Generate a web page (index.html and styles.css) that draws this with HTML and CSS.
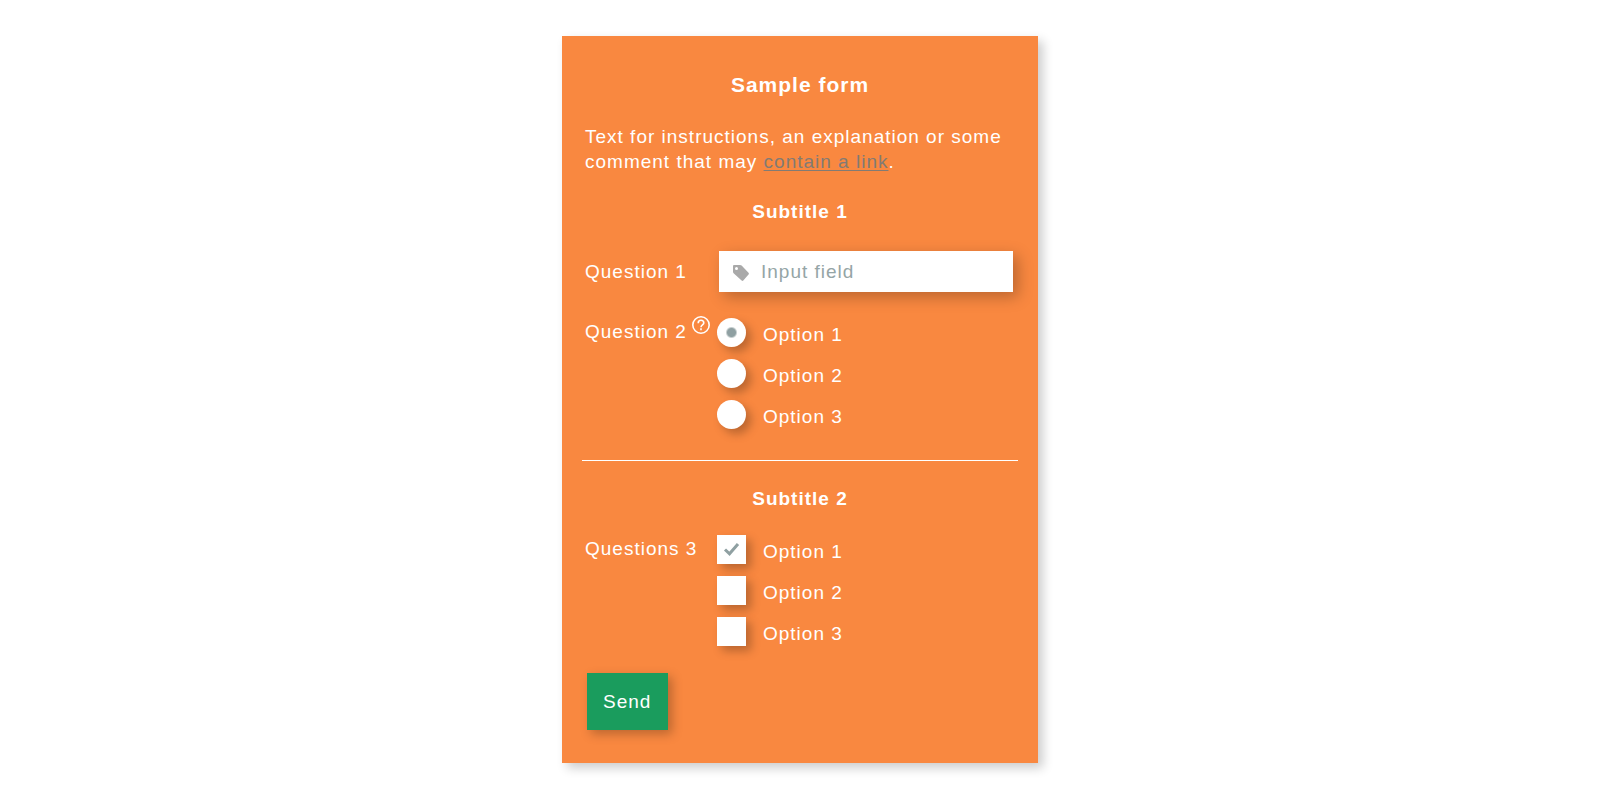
FILE: index.html
```html
<!DOCTYPE html>
<html lang="en">
<head>
<meta charset="utf-8">
<title>Sample form</title>
<link rel="stylesheet" href="styles.css">
</head>
<body>
<form class="card">
  <h1 class="title">Sample form</h1>
  <p class="intro">Text for instructions, an explanation or some comment that may <a class="link" href="#">contain a link</a>.</p>

  <h2 class="subtitle">Subtitle 1</h2>
  <div class="row row-field">
    <label class="question" for="q1">Question 1</label>
    <div class="field">
      <svg class="tag" viewBox="0 0 16 16" aria-hidden="true"><path fill-rule="evenodd" d="M1 0h6q1 0 1.600.6L15.500 7.800q.8.900 0 1.700L10.300 15.500q-.8.800-1.700 0L.6 8.200Q0 7.600 0 6.800V1Q0 0 1 0zM3.500 2a1.500 1.500 0 1 0 0 3 1.500 1.500 0 0 0 0-3z"/></svg>
      <input class="text" id="q1" type="text" placeholder="Input field">
    </div>
  </div>
  <div class="row" role="radiogroup" aria-labelledby="q2">
    <div class="question question-top" id="q2">Question 2
      <svg class="help" viewBox="0 0 18 18" aria-hidden="true"><circle cx="9" cy="9" r="8.200"/><path d="M6.200 7.200C6.200 5.400 7.400 4.300 9 4.300s2.800 1.100 2.800 2.700C11.800 8.900 9 9 9 11.200M9 12.300v1.900"/></svg>
    </div>
    <div class="options">
      <label class="option"><input class="box radio" type="radio" name="q2" checked><span class="option-text">Option 1</span></label>
      <label class="option"><input class="box radio" type="radio" name="q2"><span class="option-text">Option 2</span></label>
      <label class="option"><input class="box radio" type="radio" name="q2"><span class="option-text">Option 3</span></label>
    </div>
  </div>

  <hr class="rule">

  <h2 class="subtitle">Subtitle 2</h2>
  <div class="row" role="group" aria-labelledby="q3">
    <div class="question question-top" id="q3">Questions 3</div>
    <div class="options">
      <label class="option"><span class="check"><input class="box" type="checkbox" checked><svg class="mark" viewBox="0 0 15 13" aria-hidden="true"><path d="M1 6.500l4.500 4.300L14 1"/></svg></span><span class="option-text">Option 1</span></label>
      <label class="option"><span class="check"><input class="box" type="checkbox"><svg class="mark" viewBox="0 0 15 13" aria-hidden="true"><path d="M1 6.500l4.500 4.300L14 1"/></svg></span><span class="option-text">Option 2</span></label>
      <label class="option"><span class="check"><input class="box" type="checkbox"><svg class="mark" viewBox="0 0 15 13" aria-hidden="true"><path d="M1 6.500l4.500 4.300L14 1"/></svg></span><span class="option-text">Option 3</span></label>
    </div>
  </div>
  <button class="send" type="button">Send</button>
</form>
</body>
</html>
```
FILE: styles.css
```css
*, *::before, *::after { box-sizing: border-box; }

body {
  margin: 0;
  padding: 36px 16px;
  background: #fff;
}

.card {
  max-width: 476px;
  margin: 0 auto;
  padding: 36px 20px 33px;
  background: #f98840;
  box-shadow: 5px 5px 10px rgba(0, 0, 0, 0.2);
  color: #fff;
  font: 19px/25px "Liberation Sans", Arial, sans-serif;
  letter-spacing: 1px;
}

.title, .subtitle {
  margin: 0;
  font-size: 19px;
  line-height: 25px;
  text-align: center;
}

.title { font-size: 21px; }

.intro {
  margin: 27px 3px 25px;
}

.link {
  color: #827b74;
  text-decoration-thickness: 1px;
  text-underline-offset: 2px;
}

.row {
  display: grid;
  grid-template-columns: 132px 1fr;
  margin-top: 24px;
  padding: 0 5px 0 3px;
}

.row-field {
  align-items: center;
  margin: 27px 0 26px;
}

.question { display: flex; }
.question-top { padding-top: 1px; }

.help {
  flex: none;
  width: 18px;
  height: 18px;
  margin: -3px 0 0 5px;
  fill: none;
  stroke: #fff;
  stroke-width: 1.6;
}

.field {
  position: relative;
  margin-left: 2px;
}

.tag {
  position: absolute;
  top: 14px;
  left: 14px;
  width: 16px;
  height: 16px;
  fill: #a9a9a9;
}

.text {
  display: block;
  width: 100%;
  height: 41px;
  padding: 0 12px 0 42px;
  border: 0;
  background: #fff;
  box-shadow: 5px 5px 15px rgba(0, 0, 0, 0.25);
  color: #95a5a6;
  font: inherit;
  letter-spacing: inherit;
}

.text::placeholder {
  color: #95a5a6;
  opacity: 1;
}

.options {
  display: flex;
  flex-direction: column;
  gap: 12px;
}

.option {
  display: flex;
  gap: 17px;
}

.option-text { padding-top: 4px; }

.box {
  display: block;
  appearance: none;
  width: 29px;
  height: 29px;
  margin: 0;
  background: #fff;
  box-shadow: 5px 5px 10px rgba(0, 0, 0, 0.25);
}

.radio { border-radius: 50%; }

.radio:checked {
  background: radial-gradient(circle, #8fa0a2 4px, #fff 6px);
}

.check { display: grid; }
.check > * { grid-area: 1 / 1; }

.mark {
  place-self: center;
  width: 15px;
  height: 13px;
  overflow: visible;
  fill: none;
  stroke: #8fa0a2;
  stroke-width: 3;
  visibility: hidden;
  pointer-events: none;
}

.box:checked + .mark { visibility: visible; }

.rule {
  height: 1px;
  margin: 31px 0 25px;
  border: 0;
  background: #fff;
}

.send {
  display: block;
  margin: 27px 0 0 5px;
  padding: 16px 17px 16px 16px;
  border: 0;
  background: #1a9c5d;
  box-shadow: 4px 4px 10px rgba(0, 0, 0, 0.25);
  color: #fff;
  font: inherit;
  letter-spacing: inherit;
}
```
